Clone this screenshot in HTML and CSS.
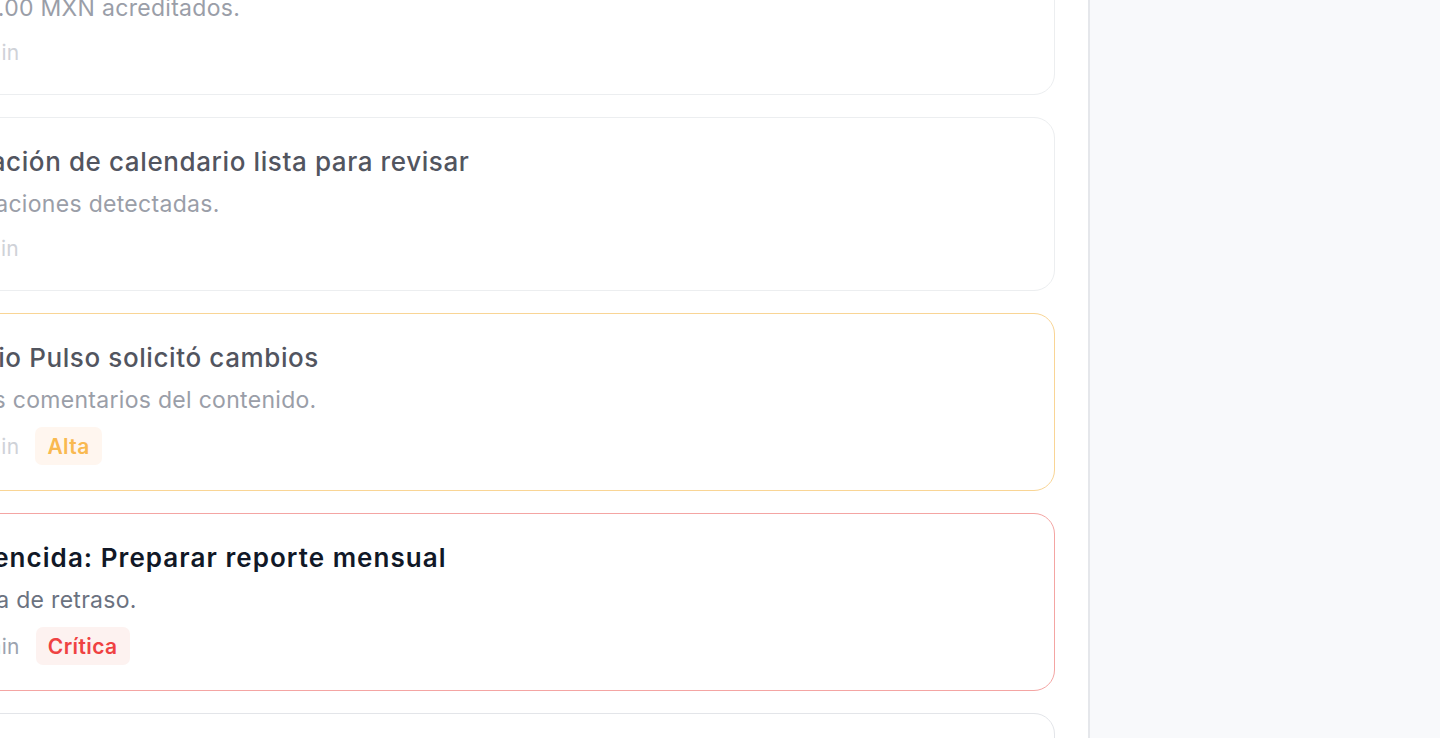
FILE: index.html
```html
<!DOCTYPE html>
<html lang="es">

<head>
    <meta charset="UTF-8">
    <meta name="viewport" content="width=device-width, initial-scale=1.0">
    <title>Notificaciones</title>

    <link rel="stylesheet" href="styles.css">
</head>

<body>
    <div class="page">
        <div class="main">
            <div class="list">
                <div class="card read">
                    <div class="card-title">Pago recibido de Estudio Pulso</div>
                    <div class="card-desc">$148,500.00 MXN acreditados.</div>
                    <div class="card-meta"><span>hace 20 min</span></div>
                </div>
                <div class="card read">
                    <div class="card-title">Planificación de calendario lista para revisar</div>
                    <div class="card-desc">Sin desviaciones detectadas.</div>
                    <div class="card-meta"><span>hace 25 min</span></div>
                </div>
                <div class="card read high">
                    <div class="card-title">El Estudio Pulso solicitó cambios</div>
                    <div class="card-desc">Revisa los comentarios del contenido.</div>
                    <div class="card-meta"><span>hace 38 min</span><span class="badge badge-high">Alta</span></div>
                </div>
                <div class="card critical">
                    <div class="card-title">Tarea vencida: Preparar reporte mensual</div>
                    <div class="card-desc">Lleva 1 día de retraso.</div>
                    <div class="card-meta"><span>hace 45 min</span><span class="badge badge-critical">Crítica</span></div>
                </div>
                <div class="card">
                    <div class="card-title">Nuevo comentario en Campaña de verano</div>
                    <div class="card-desc">Ana dejó una nota en el borrador.</div>
                    <div class="card-meta"><span>hace 52 min</span></div>
                </div>
            </div>
        </div>
        <div class="aside"></div>
    </div>
</body>

</html>
```

FILE: styles.css
```css
* {
    box-sizing: border-box;
}

html,
body {
    margin: 0;
    height: 100%;
    overflow: hidden;
    background-color: #ffffff;
}

body {
    font-family: Inter, "Noto Sans", sans-serif;
}

/* el contenido está desplazado a la izquierda */
.page {
    display: flex;
    width: calc(100% + 169px);
    height: 100%;
    margin-left: -169px;
}

.main {
    flex: 1;
    padding: 0 33px 0 32px;
}

.aside {
    width: 352px;
    flex-shrink: 0;
    background-color: #f8f9fb;
    border-left: 2px solid #e5e7eb;
}

.list {
    display: flex;
    flex-direction: column;
    gap: 22px;
    margin-top: -79px;
}

.card {
    border: 1px solid #e3e5e9;
    border-radius: 21px;
    padding: 26px 30px 25px 30px;
    background-color: #ffffff;
}

.card.read {
    border-color: #eceef0;
}

.card.high {
    border-color: #f9d595;
}

.card.critical {
    border-color: #f4a5a3;
}

.card-title {
    font-size: 26px;
    line-height: 36px;
    font-weight: 500;
    letter-spacing: 0.6px;
    color: #111827;
    white-space: nowrap;
}

.card-desc {
    margin-top: 9px;
    font-size: 23px;
    line-height: 30px;
    letter-spacing: 0.3px;
    color: #6b7280;
    white-space: nowrap;
}

.card-meta {
    display: flex;
    align-items: center;
    gap: 16px;
    min-height: 34px;
    margin-top: 12px;
    font-size: 21px;
    letter-spacing: 0.3px;
    color: #9ca3af;
}

.read .card-title {
    color: #52555f;
}

.read .card-desc {
    color: #9a9ea8;
}

.read .card-meta {
    color: #cfd2d8;
}

.critical .card-title {
    font-weight: 600;
    letter-spacing: 1.05px;
}

.badge {
    display: inline-flex;
    align-items: center;
    height: 38px;
    padding: 0 12px;
    border-radius: 7px;
    font-weight: 600;
    font-size: 21px;
    letter-spacing: 0.4px;
}

.badge-high {
    background-color: #fff6ef;
    color: #f9b950;
}

.badge-critical {
    background-color: #fdf2f0;
    color: #ef4242;
}
```
